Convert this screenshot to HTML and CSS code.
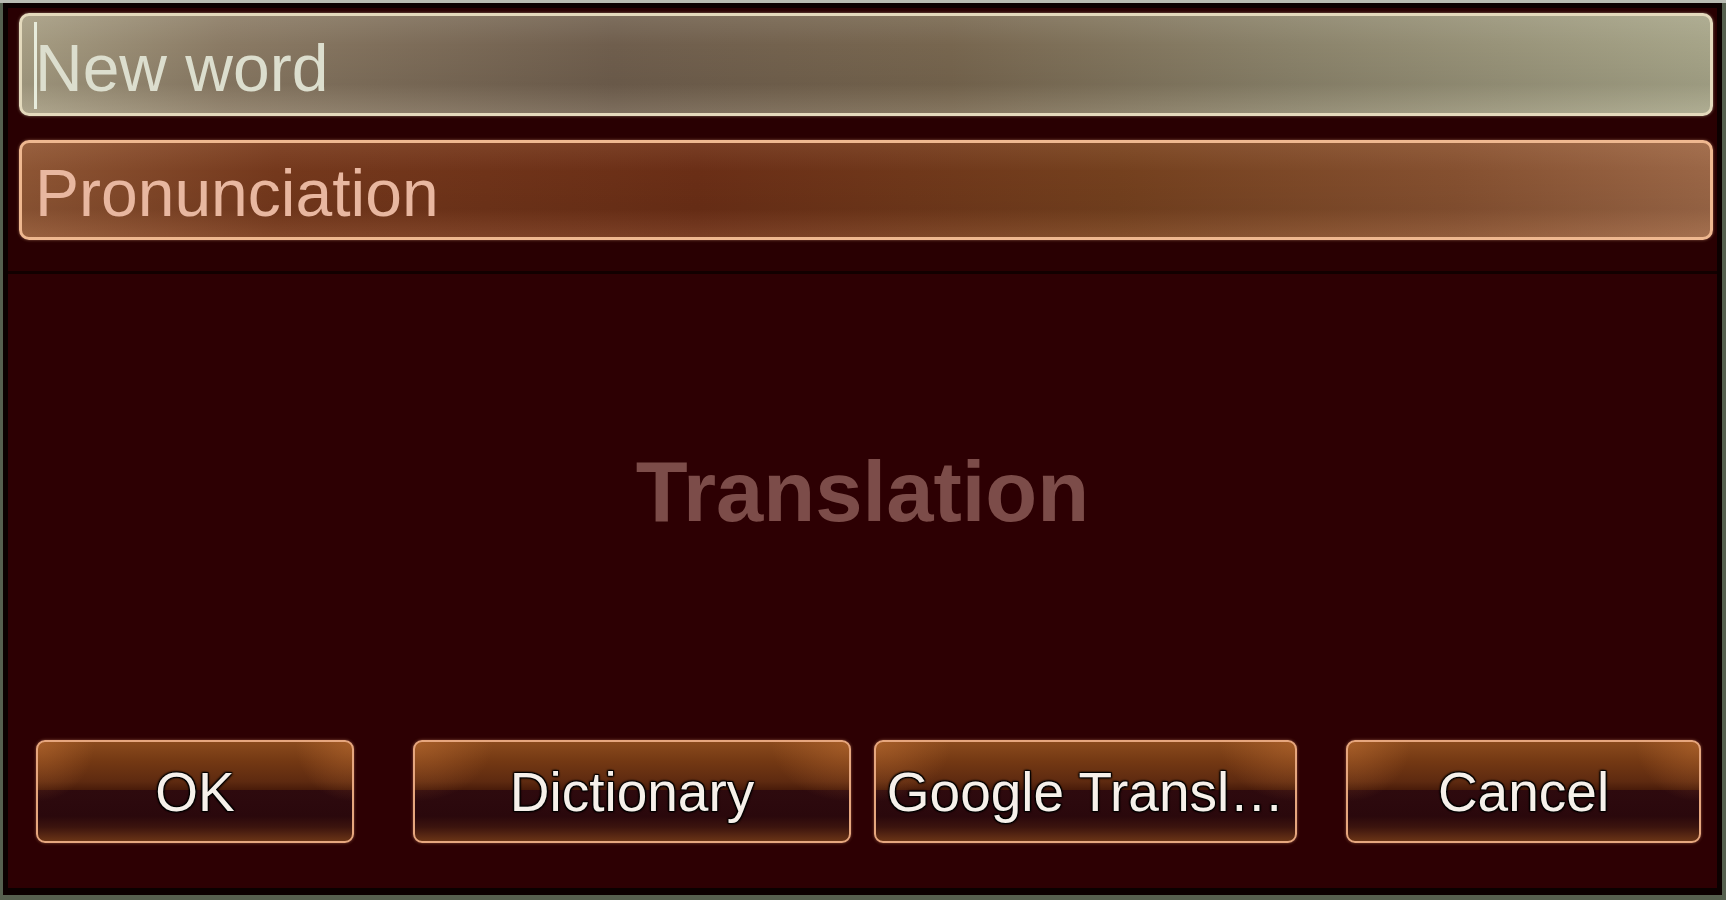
FILE: index.html
```html
<!DOCTYPE html>
<html lang="en">
<head>
<meta charset="utf-8">
<title>New word</title>
<link rel="stylesheet" href="styles.css">
</head>
<body>
<div class="dialog">
  <div class="fields">
    <div class="field field-word"><span class="caret"></span><span class="placeholder">New word</span></div>
    <div class="field field-pron"><span class="placeholder">Pronunciation</span></div>
  </div>
  <div class="lower">
    <div class="translation">Translation</div>
    <div class="buttons">
      <button class="btn btn-ok">OK</button>
      <button class="btn btn-dict">Dictionary</button>
      <button class="btn btn-google">Google Transl…</button>
      <button class="btn btn-cancel">Cancel</button>
    </div>
  </div>
</div>
</body>
</html>
```
FILE: styles.css
```css
html, body {
  margin: 0;
  padding: 0;
}
body {
  background: linear-gradient(to bottom, #b9bcb3 0, #b9bcb3 3px, #56604f 3px, #56604f 100%);
  font-family: "Liberation Sans", Arial, sans-serif;
  width: 1726px;
  height: 900px;
  overflow: hidden;
}
.dialog {
  box-sizing: border-box;
  margin: 3px 4px 5px 3px;
  width: 1719px;
  height: 892px;
  border: 5px solid #0b0000;
  border-bottom-width: 7px;
  background: #2d0003;
  display: flex;
  flex-direction: column;
}
.fields {
  display: flex;
  flex-direction: column;
  gap: 24px;
  padding: 5px 4px 31px 11px;
  background: #290002;
  border-bottom: 3px solid #120000;
}
.field {
  box-sizing: border-box;
  position: relative;
  display: flex;
  align-items: center;
  border-radius: 10px;
  font-size: 66px;
  padding-left: 13px;
}
.field-word {
  height: 103px;
  border: 3px solid #e4dabd;
  background:
    linear-gradient(to bottom, rgba(255,255,240,0.10) 0%, rgba(0,0,0,0) 30%, rgba(0,0,0,0.06) 70%, rgba(255,255,240,0.10) 100%),
    linear-gradient(to right, #a59c82 0%, #8a7a64 12%, #6f5e4d 35%, #77664f 55%, #8a826a 75%, #a6a488 100%);
  color: #dcdece;
  box-shadow: 0 0 3px rgba(230, 220, 190, 0.5);
}
.field-pron {
  height: 100px;
  border: 3px solid #efb890;
  background:
    linear-gradient(to bottom, rgba(255,200,160,0.10) 0%, rgba(0,0,0,0) 30%, rgba(0,0,0,0.05) 70%, rgba(255,200,160,0.10) 100%),
    linear-gradient(to right, #8d5534 0%, #74381c 15%, #6a2e16 40%, #74401e 65%, #855030 85%, #9a6646 100%);
  color: #e8b7a0;
  box-shadow: 0 0 3px rgba(240, 180, 140, 0.5);
}
.placeholder {
  position: relative;
  top: 3px;
  line-height: 1;
}
.caret {
  position: absolute;
  left: 12px;
  top: 6px;
  bottom: 4px;
  width: 3px;
  background: #e8ecdc;
}
.lower {
  flex: 1;
  display: flex;
  flex-direction: column;
}
.translation {
  flex: 1;
  display: flex;
  align-items: center;
  justify-content: center;
  padding-bottom: 30px;
  font-size: 85px;
  font-weight: bold;
  color: #7c4c49;
}
.buttons {
  display: flex;
  padding-bottom: 45px;
}
.btn {
  box-sizing: border-box;
  height: 103px;
  border: 2px solid #e6a67e;
  border-radius: 9px;
  padding: 0 4px;
  font-family: "Liberation Sans", Arial, sans-serif;
  font-size: 55px;
  color: #f6f0ea;
  text-shadow: 0 0 2px #000, 1px 1px 2px #000, -1px -1px 2px #000, 1px -1px 1px #000, -1px 1px 1px #000;
  white-space: nowrap;
  background:
    radial-gradient(ellipse 18% 60% at 0% 0%, rgba(190,110,50,0.55), rgba(0,0,0,0) 100%),
    radial-gradient(ellipse 18% 60% at 100% 0%, rgba(190,110,50,0.55), rgba(0,0,0,0) 100%),
    linear-gradient(to bottom, #8a4a1d 0%, #733813 20%, #5e2a10 40%, #4a1c0a 48%, #2e0a0e 48%, #2a080c 75%, #3c140e 86%, #6a3416 100%);
  box-shadow: 0 0 3px rgba(230, 160, 120, 0.5);
}
.btn-ok { width: 318px; margin-left: 28px; }
.btn-dict { width: 438px; margin-left: 59px; }
.btn-google { width: 423px; margin-left: 23px; }
.btn-cancel { width: 355px; margin-left: 49px; }
```
